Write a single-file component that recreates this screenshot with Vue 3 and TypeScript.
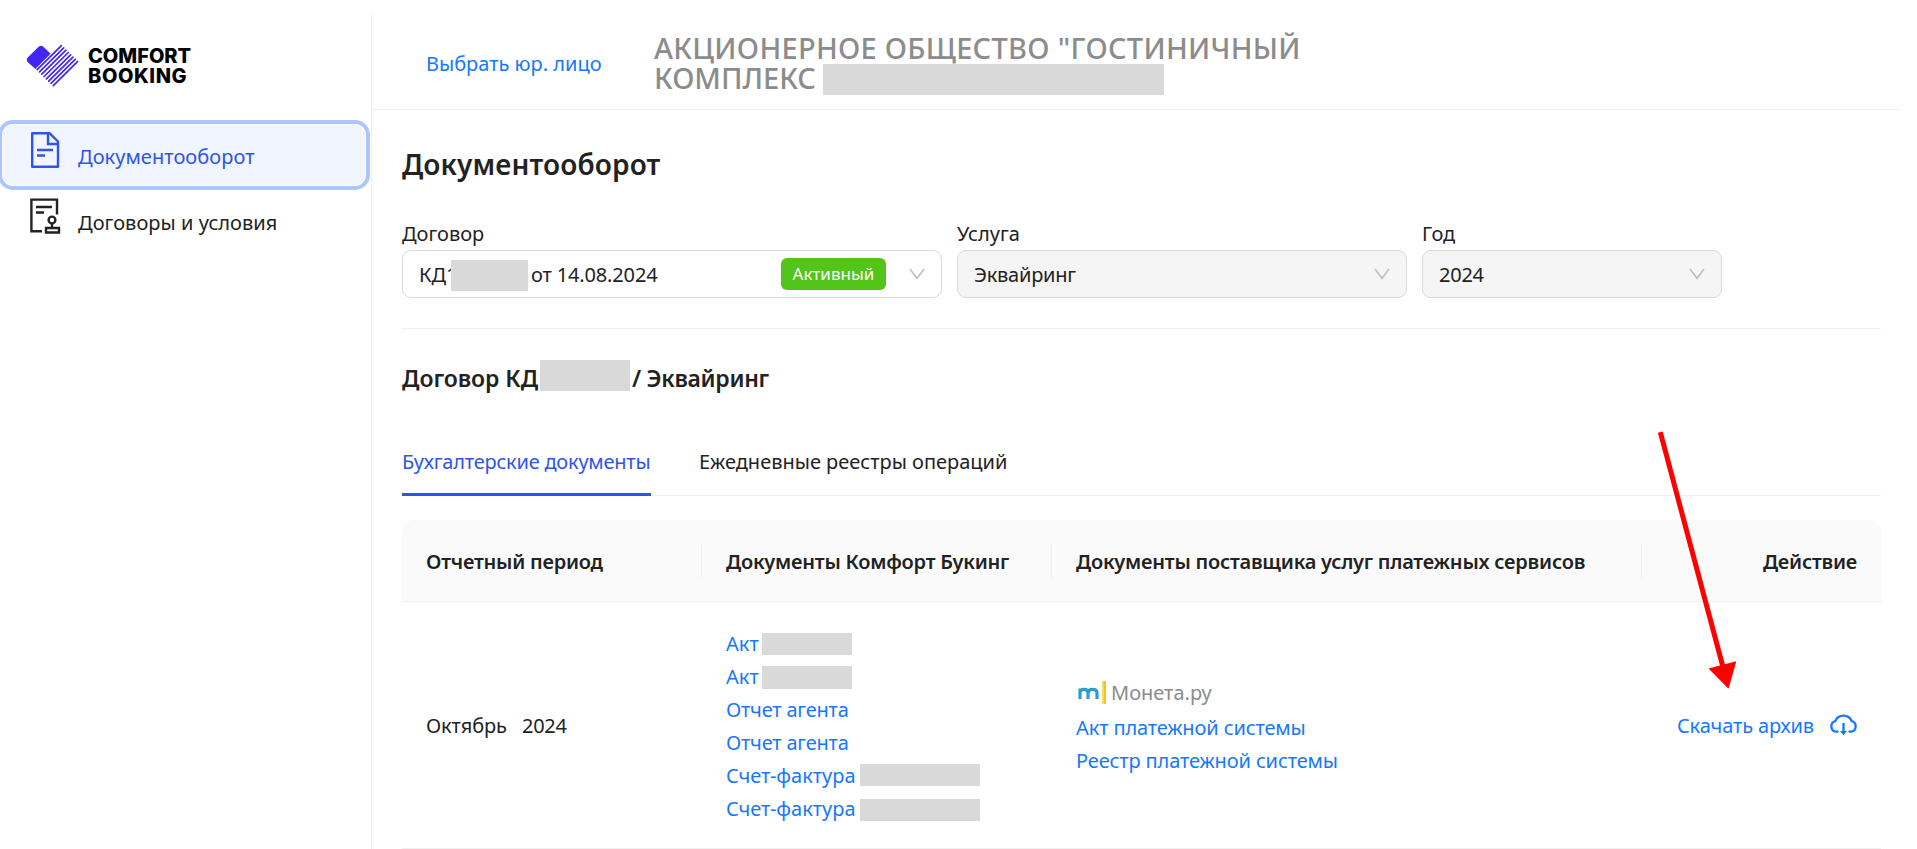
<script setup lang="ts">
interface DocLink {
  label: string
  mask?: string
}

const menu = [
  { id: 'docs', label: 'Документооборот', active: true },
  { id: 'terms', label: 'Договоры и условия', active: false },
]

const documents: DocLink[] = [
  { label: 'Акт', mask: 'act' },
  { label: 'Акт', mask: 'act tall' },
  { label: 'Отчет агента' },
  { label: 'Отчет агента' },
  { label: 'Счет-фактура', mask: 'invoice' },
  { label: 'Счет-фактура', mask: 'invoice low' },
]

const stripes = Array.from({ length: 8 }, (_, i) => {
  const d = i * 2.3
  return `M${11.2 + d} ${25.6 + d}L${35.4 + d} ${1.6 + d}`
})
</script>

<template>
  <div class="app">
    <aside class="sidebar">
      <div class="logo">
        <svg class="logo-mark" width="54" height="44" viewBox="0 0 54 44">
          <path
            d="M2 13.2 12.4 2.9Q15 .4 17.6 2.9L24.6 9.8 9.4 25 1.9 18.2Q-.5 15.7 2 13.2Z"
            fill="#4326f5"
          />
          <path v-for="(d, i) in stripes" :key="i" :d="d" stroke="#4326f5" stroke-width="1.7" stroke-linecap="round" />
        </svg>
        <div class="logo-text"><span>COMFORT</span><span class="second">BOOKING</span></div>
      </div>
      <nav class="menu">
        <a v-for="item in menu" :key="item.id" class="menu-item" :class="{ active: item.active }">
          <svg v-if="item.id === 'docs'" width="32" height="38" viewBox="0 0 32 38" fill="none" stroke="currentColor" stroke-width="2.4">
            <path d="M2.2 2.2H19.5L28 10.5V35.8H2.2Z" stroke-linejoin="round" />
            <path d="M18 2V13H28" />
            <path d="M7 19H23M7 24.5H15" />
          </svg>
          <svg v-else width="32" height="38" viewBox="0 0 32 38" fill="none" stroke="currentColor" stroke-width="2.4">
            <path d="M12 34.2H1.4V2.6H27V17.5" />
            <path d="M6 10H22M6 15.5H14" />
            <circle cx="22" cy="23" r="3.4" />
            <path d="M22 26.5V31M16 31H29V35.5H16Z" />
          </svg>
          <span>{{ item.label }}</span>
        </a>
      </nav>
    </aside>

    <main class="main">
      <header class="header">
        <a class="link choose">Выбрать юр. лицо</a>
        <div class="company">
          <div>АКЦИОНЕРНОЕ ОБЩЕСТВО "ГОСТИНИЧНЫЙ</div>
          <div class="company-row"><span class="company-name">КОМПЛЕКС</span><i class="mask"></i></div>
        </div>
      </header>

      <div class="content">
        <h1>Документооборот</h1>

        <div class="filters">
          <div class="field contract">
            <label>Договор</label>
            <div class="select">
              <span class="contract-no">КД1</span><i class="mask"></i><span class="contract-date">от 14.08.2024</span>
              <span class="tag">Активный</span>
              <svg class="chevron" width="18" height="12" viewBox="0 0 18 12"><path d="M2 1 9 10.3 16 1" /></svg>
            </div>
          </div>
          <div class="field service">
            <label>Услуга</label>
            <div class="select disabled">
              <span class="value">Эквайринг</span>
              <svg class="chevron" width="18" height="12" viewBox="0 0 18 12"><path d="M2 1 9 10.3 16 1" /></svg>
            </div>
          </div>
          <div class="field year">
            <label>Год</label>
            <div class="select disabled">
              <span class="value">2024</span>
              <svg class="chevron" width="18" height="12" viewBox="0 0 18 12"><path d="M2 1 9 10.3 16 1" /></svg>
            </div>
          </div>
        </div>

        <hr />

        <h2><span class="h2-no">Договор КД</span><i class="mask"></i><span class="h2-service">/ Эквайринг</span></h2>

        <div class="tabs">
          <a class="tab current">Бухгалтерские документы</a>
          <a class="tab">Ежедневные реестры операций</a>
        </div>

        <div class="table">
          <div class="row head">
            <div class="cell"><span>Отчетный период</span></div>
            <div class="cell"><span>Документы Комфорт Букинг</span></div>
            <div class="cell"><span>Документы поставщика услуг платежных сервисов</span></div>
            <div class="cell end"><span>Действие</span></div>
          </div>
          <div class="row body">
            <div class="cell period"><span class="month">Октябрь</span><span class="period-year">2024</span></div>
            <div class="cell docs">
              <div v-for="(doc, i) in documents" :key="i" class="doc">
                <a class="link" :class="{ tight: !doc.mask }">{{ doc.label }}</a><i v-if="doc.mask" class="mask" :class="doc.mask"></i>
              </div>
            </div>
            <div class="cell provider">
              <div class="moneta">
                <svg width="35" height="26" viewBox="0 0 35 26" fill="none">
                  <path d="M4 19V8.5M4 12Q4.5 9.3 8 9.3 12 9.3 12 13V19M12 13Q12.5 9.3 16.5 9.3 21 9.3 21 13V19" stroke="#2b9bd0" stroke-width="3.2" />
                  <path d="M28.2 1V24" stroke="#f3c81e" stroke-width="3.6" />
                  <path d="M27.2 1V24" stroke="#f8dd55" stroke-width="1.2" />
                </svg>
                <span>Монета.ру</span>
              </div>
              <a class="link system">Акт платежной системы</a>
              <a class="link system">Реестр платежной системы</a>
            </div>
            <div class="cell end">
              <a class="link download">
                <span>Скачать архив</span>
                <svg width="29" height="24" viewBox="0 0 29 24" fill="none" stroke="currentColor" stroke-width="2.3">
                  <path d="M8.6 18.6H7.2A5.3 5.3 0 0 1 6.3 8.2 8.8 8.8 0 0 1 22.7 8.2 5.3 5.3 0 0 1 21.8 18.6H20.4" stroke-linecap="round" stroke-linejoin="round" />
                  <path d="M14.5 10V18" />
                  <path d="M14.5 22.3 11 18H18Z" fill="currentColor" stroke="none" />
                </svg>
              </a>
            </div>
          </div>
        </div>
      </div>
    </main>

    <svg class="pointer" width="90" height="264" viewBox="0 0 90 264">
      <path d="M10.3 2.2 73 237" stroke="#f00" stroke-width="5" />
      <path d="M58.5 238.5 86.3 231.3 78.5 258.8Z" fill="#f00" />
    </svg>
  </div>
</template>

<style>
body {
  margin: 0;
  background: #fff;
  overflow: hidden;
}
</style>

<style scoped>
.app {
  position: relative;
  display: flex;
  height: 849px;
  font: 20px/30px 'Noto Sans', 'Open Sans', sans-serif;
  color: #222;
  white-space: nowrap;
}

.link {
  color: #1677ff;
}

.mask {
  display: block;
  flex: none;
  background: #d9d9d9;
}

.sidebar {
  width: 371px;
  flex: none;
  margin-top: 14px;
  border-right: 1px solid #f0f0f0;
}

.logo {
  display: flex;
  margin: 30px 0 0 26px;
  height: 44px;
}

.logo-text {
  display: flex;
  flex-direction: column;
  margin: 2px 0 0 8px;
  font: 800 20px/20px Inter, sans-serif;
  color: #000;
}

.second {
  letter-spacing: 0.6px;
}

.menu {
  display: flex;
  flex-direction: column;
  gap: 6px;
  margin: 37px 6px 0 3px;
}

.menu-item {
  display: flex;
  align-items: flex-start;
  gap: 16px;
  height: 60px;
  padding-left: 27px;
  border-radius: 10px;
}

.menu-item svg {
  margin-top: 6px;
}

.menu-item span {
  margin-top: 17px;
  letter-spacing: 0.05px;
}

.menu-item.active {
  color: #2f54eb;
  background: #f0f5ff;
  outline: 4px solid #adc6ff;
  outline-offset: 1px;
}

.main {
  flex: 1;
  min-width: 0;
}

.header {
  display: flex;
  align-items: flex-start;
  height: 109px;
  margin-right: 16px;
  border-bottom: 1px solid #f0f0f0;
}

.choose {
  width: 228px;
  margin: 49px 0 0 54px;
}

.company {
  margin-top: 33px;
  font-size: 29px;
  font-weight: 500;
  letter-spacing: 0.3px;
  color: #8c8c8c;
}

.company-row {
  display: flex;
}

.company-name {
  width: 169px;
  letter-spacing: 0;
}

.company .mask {
  width: 341px;
  height: 31px;
  margin-top: 1px;
}

.content {
  margin: 36px 36px 0 30px;
}

h1 {
  margin: 0;
  font-size: 28px;
  line-height: 36px;
  font-weight: 600;
  letter-spacing: 0.12px;
}

.filters {
  display: flex;
  gap: 15px;
  margin-top: 39px;
}

.field label {
  display: block;
  height: 26px;
  margin-bottom: 3px;
  line-height: 26px;
}

.contract {
  width: 540px;
}

.service {
  width: 450px;
}

.year {
  width: 300px;
}

.select {
  display: flex;
  align-items: center;
  height: 48px;
  box-sizing: border-box;
  padding: 0 15px 0 16px;
  border: 1px solid #d9d9d9;
  border-radius: 9px;
}

.select.disabled {
  background: #f5f5f5;
}

.value {
  padding-top: 2px;
  letter-spacing: -0.25px;
}

.contract-no {
  width: 32px;
  padding-top: 2px;
}

.select .mask {
  width: 77px;
  height: 31px;
  margin-top: 2px;
}

.contract-date {
  padding: 2px 0 0 3px;
  letter-spacing: -0.15px;
}

.tag {
  width: 105px;
  height: 32px;
  margin-left: auto;
  border-radius: 6px;
  background: #52c41a;
  color: #fff;
  font-size: 17px;
  line-height: 32px;
  text-align: center;
}

.chevron {
  flex: none;
  margin-left: auto;
  fill: none;
  stroke: #bfbfbf;
  stroke-width: 1.6;
}

.tag + .chevron {
  margin-left: 22px;
}

hr {
  height: 1px;
  margin: 30px 0 0;
  border: 0;
  background: #f0f0f0;
}

h2 {
  display: flex;
  align-items: flex-start;
  margin: 33px 0 0;
  font-size: 23px;
  line-height: 32px;
  font-weight: 600;
}

.h2-no {
  width: 138px;
  letter-spacing: -0.05px;
}

h2 .mask {
  width: 90px;
  height: 31px;
  margin-top: -2px;
}

.h2-service {
  margin-left: 2px;
  letter-spacing: -0.3px;
}

.tabs {
  display: flex;
  gap: 48px;
  height: 48px;
  margin-top: 53px;
  border-bottom: 1px solid #f0f0f0;
}

.tab {
  height: 46px;
}

.tab.current {
  width: 249px;
  color: #2f54eb;
  border-bottom: 3px solid #2f54eb;
  letter-spacing: -0.22px;
}

.table {
  margin-top: 24px;
}

.row {
  display: grid;
  grid-template-columns: 300px 350px 590px 1fr;
  border-bottom: 1px solid #f0f0f0;
}

.cell {
  display: flex;
  align-items: center;
  padding: 0 24px;
}

.cell.end {
  justify-content: flex-end;
}

.head {
  height: 81px;
  align-items: center;
  border-radius: 12px 12px 0 0;
  background: #fafafa;
  font-weight: 600;
  letter-spacing: -0.23px;
}

.head .cell {
  height: 34px;
}

.head .cell span {
  padding-top: 2px;
}

.head .cell:not(:last-child) {
  border-right: 1px solid #f0f0f0;
}

.body {
  height: 246px;
  line-height: 33px;
}

.month {
  width: 96px;
  letter-spacing: -0.13px;
}

.period-year {
  letter-spacing: -0.3px;
}

.cell.docs,
.cell.provider {
  flex-direction: column;
  align-items: flex-start;
}

.cell.docs {
  padding-top: 25px;
}

.doc {
  display: flex;
  align-items: flex-start;
  height: 33px;
}

.tight {
  letter-spacing: -0.2px;
}

.doc .act {
  width: 90px;
  height: 22px;
  margin: 6px 0 0 3px;
}

.doc .tall {
  height: 23px;
}

.doc .invoice {
  width: 120px;
  height: 22px;
  margin: 5px 0 0 4px;
}

.doc .low {
  margin-top: 7px;
}

.cell.provider {
  justify-content: center;
  padding-top: 2px;
}

.system {
  letter-spacing: -0.12px;
}

.moneta {
  display: flex;
  align-items: flex-start;
  height: 35px;
  color: #8c8c8c;
}

.moneta svg {
  margin-top: 4px;
}

.download {
  display: flex;
  align-items: center;
  gap: 15px;
  margin-right: -1px;
  letter-spacing: -0.15px;
}

.pointer {
  position: absolute;
  left: 1650px;
  top: 430px;
  pointer-events: none;
}
</style>
